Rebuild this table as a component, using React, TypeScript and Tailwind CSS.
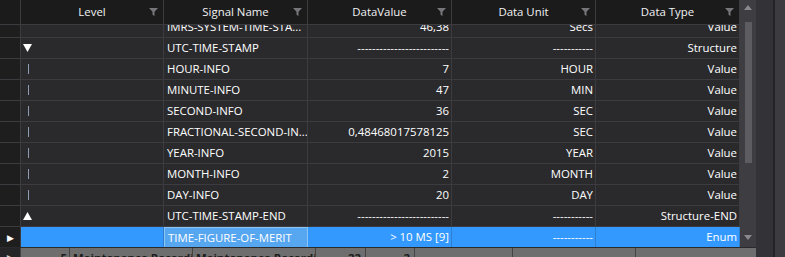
import React from "react";

type Row = {
  level: "" | "open" | "child" | "close";
  name: string;
  value: string;
  unit: string;
  type: string;
  selected?: boolean;
};

const DV = "-------------------------";
const DU = "-----------";

const rows: Row[] = [
  { level: "", name: "IMRS-SYSTEM-TIME-STA...", value: "46,38", unit: "Secs", type: "Value" },
  { level: "open", name: "UTC-TIME-STAMP", value: DV, unit: DU, type: "Structure" },
  { level: "child", name: "HOUR-INFO", value: "7", unit: "HOUR", type: "Value" },
  { level: "child", name: "MINUTE-INFO", value: "47", unit: "MIN", type: "Value" },
  { level: "child", name: "SECOND-INFO", value: "36", unit: "SEC", type: "Value" },
  { level: "child", name: "FRACTIONAL-SECOND-IN...", value: "0,48468017578125", unit: "SEC", type: "Value" },
  { level: "child", name: "YEAR-INFO", value: "2015", unit: "YEAR", type: "Value" },
  { level: "child", name: "MONTH-INFO", value: "2", unit: "MONTH", type: "Value" },
  { level: "child", name: "DAY-INFO", value: "20", unit: "DAY", type: "Value" },
  { level: "close", name: "UTC-TIME-STAMP-END", value: DV, unit: DU, type: "Structure-END" },
  { level: "", name: "TIME-FIGURE-OF-MERIT", value: "> 10 MS [9]", unit: DU, type: "Enum", selected: true },
];

const headers = ["Level", "Signal Name", "DataValue", "Data Unit", "Data Type"];

const Funnel = () => (
  <svg width="9" height="8" viewBox="0 0 9 8" className="shrink-0">
    <path d="M0 0 H9 L5.5 3.8 V8 L3.5 6.8 V3.8 Z" fill="#77777b" />
  </svg>
);

const LevelMark = ({ level }: { level: Row["level"] }) => {
  if (level === "open")
    return (
      <svg width="9" height="8" viewBox="0 0 9 8">
        <path d="M0 0 H9 L4.5 8 Z" fill="#ffffff" />
      </svg>
    );
  if (level === "close")
    return (
      <svg width="9" height="8" viewBox="0 0 9 8">
        <path d="M0 8 H9 L4.5 0 Z" fill="#ffffff" />
      </svg>
    );
  if (level === "child") return <div className="ml-[5px] h-[10px] w-px bg-[#8e9bb0]" />;
  return null;
};

const cell = "flex h-[21px] items-center overflow-hidden whitespace-nowrap border-r border-b";

export default function App() {
  return (
    <div
      className="flex h-[257px] w-[785px] overflow-hidden bg-[#2b2b2e] text-[11.4px] text-white"
      style={{ fontFamily: '"Open Sans", "Noto Sans", sans-serif' }}
    >
      <div className="flex w-[756px] shrink-0 flex-col">
        <div className="flex h-[247px] shrink-0">
          <div className="flex w-[740px] flex-col">
            {/* header */}
            <div className="flex h-[25px] shrink-0 bg-[#1b1b1c]">
              <div className="w-[21px] border-r border-b border-[#3c3c40]" />
              {headers.map((h, i) => (
                <div
                  key={h}
                  className={`flex items-center border-r border-b border-[#3c3c40] pr-[5px] pl-[14px] ${
                    i === 0 ? "w-[143px]" : "w-[144px]"
                  }`}
                >
                  <span className="flex-1 text-center text-[#f2f2f2]">{h}</span>
                  <Funnel />
                </div>
              ))}
            </div>
            {/* body */}
            <div className="flex-1 overflow-hidden">
              <div className="-mt-[8px]">
                {rows.map((r, i) => {
                  const line = r.selected ? "border-[#2f7fd0]" : "border-[#3c3c40]";
                  const bg = r.selected ? "bg-[#3399ff]" : "bg-[#2a2a2d]";
                  return (
                    <div key={i} className={`flex ${r.selected ? "border-t border-[#5fb0ff] -mt-px" : ""}`}>
                      <div className={`${cell} w-[21px] justify-center border-[#3c3c40] bg-[#1e1e1f]`}>
                        {r.selected && <span className="text-[9px] leading-none text-white">▶</span>}
                      </div>
                      <div className={`${cell} w-[143px] pl-[2px] ${line} ${bg}`}>
                        <LevelMark level={r.level} />
                      </div>
                      <div
                        className={`${cell} w-[144px] pl-[3px] ${
                          r.selected ? "border border-[#8cc4f5] bg-[#57a6f0]" : `${line} ${bg}`
                        }`}
                      >
                        {r.name}
                      </div>
                      <div className={`${cell} w-[144px] justify-end pr-[2px] ${line} ${bg}`}>{r.value}</div>
                      <div className={`${cell} w-[144px] justify-end pr-[2px] ${line} ${bg}`}>{r.unit}</div>
                      <div className={`${cell} w-[144px] justify-end pr-[2px] ${line} ${bg}`}>{r.type}</div>
                    </div>
                  );
                })}
              </div>
            </div>
          </div>
          {/* vertical scrollbar */}
          <div className="flex w-[16px] flex-col items-center bg-[#3e3e42] pt-[5px] pb-[7px]">
            <svg width="8" height="5" viewBox="0 0 8 5">
              <path d="M0 5 H8 L4 0 Z" fill="#8a8a8e" />
            </svg>
            <div className="mt-[12px] h-[141px] w-[7px] bg-[#5d5d61]" />
            <div className="flex-1" />
            <svg width="8" height="5" viewBox="0 0 8 5">
              <path d="M0 0 H8 L4 5 Z" fill="#8a8a8e" />
            </svg>
          </div>
        </div>
        {/* master row */}
        <div className="flex h-[21px] border-t border-[#2a2a2d] bg-[#6e6e6e] font-bold text-[#1c1c1c]">
          <div className="flex w-[20px] items-start justify-center bg-[#252527] pt-[5px]">
            <span className="text-[9px] leading-none text-[#cfcfcf]">▶</span>
          </div>
          <div className="w-[49px] border-l border-[#444] pt-[1px] pr-[2px] text-right">5</div>
          <div className="w-[123px] overflow-hidden border-l border-[#444] pt-[1px] pl-[3px] whitespace-nowrap">Maintenance Recordi</div>
          <div className="w-[123px] overflow-hidden border-l border-[#444] pt-[1px] pl-[3px] whitespace-nowrap">Maintenance Recordi</div>
          <div className="w-[50px] border-l border-[#444] pt-[1px] pr-[4px] text-right">22</div>
          <div className="w-[49px] border-l border-[#444] pt-[1px] pr-[4px] text-right">2</div>
          <div className="w-[98px] border-l border-[#444]" />
          <div className="w-[123px] border-l border-[#444]" />
          <div className="flex-1 border-l border-[#444]" />
        </div>
      </div>
      <div className="w-[17px] shrink-0 bg-[#333337]" />
      <div className="w-[2px] shrink-0 bg-[#232326]" />
      <div className="flex-1 bg-[#3c3c40]" />
    </div>
  );
}
